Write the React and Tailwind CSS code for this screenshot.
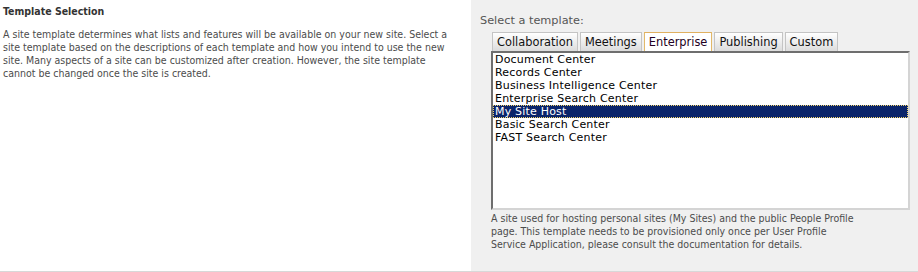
import React from "react";

const items = [
  "Document Center",
  "Records Center",
  "Business Intelligence Center",
  "Enterprise Search Center",
  "My Site Host",
  "Basic Search Center",
  "FAST Search Center",
];

const tabs = ["Collaboration", "Meetings", "Enterprise", "Publishing", "Custom"];

export default function App() {
  return (
    <div className="w-[918px] h-[272px] flex flex-col bg-white overflow-hidden">
      <div className="flex flex-1 border-b border-[#d8d8d8]">
        <div className="w-[471px] shrink-0 pl-[3px] pt-[4px] text-[#4c4c4c]">
          <div className="font-[family-name:'DejaVu_Sans_Condensed',sans-serif] text-[10.5px] font-bold leading-[14px] text-[#333]">
            Template Selection
          </div>
          <div className="mt-[10px] text-[10.5px] leading-[13px] font-[family-name:'DejaVu_Sans_Condensed',sans-serif] whitespace-nowrap">
            <div>A site template determines what lists and features will be available on your new site. Select a</div>
            <div>site template based on the descriptions of each template and how you intend to use the new</div>
            <div>site. Many aspects of a site can be customized after creation. However, the site template</div>
            <div>cannot be changed once the site is created.</div>
          </div>
        </div>
        <div className="flex-1 bg-[#f0f0f0] pt-[14px]">
          <div className="pl-[9px] text-[11.3px] leading-[13px] text-[#555] font-[family-name:'DejaVu_Sans',sans-serif]">
            Select a template:
          </div>
          <div className="pl-[20px] mt-[5px]">
            <div className="flex gap-[2px] pl-[1px] h-[19px] items-stretch">
              {tabs.map((t) =>
                t === "Enterprise" ? (
                  <div
                    key={t}
                    className="px-[4px] bg-white border border-b-0 border-[#e2b96a] border-t-[#e0b060] text-[11.4px] leading-[19px] text-[#220022] font-[family-name:'DejaVu_Sans',sans-serif]"
                  >
                    {t}
                  </div>
                ) : (
                  <div
                    key={t}
                    className="px-[4px] bg-gradient-to-b from-white to-[#dcdcdc] border border-b-0 border-[#c4c4c4] text-[11.4px] leading-[19px] text-[#111] font-[family-name:'DejaVu_Sans',sans-serif]"
                  >
                    {t}
                  </div>
                )
              )}
            </div>
            <div className="w-[419px] h-[159px] bg-white border-2 border-t-[#6e6e6e] border-l-[#6e6e6e] border-r-[#d4d4d4] border-b-[#d4d4d4] overflow-hidden">
              {items.map((it) =>
                it === "My Site Host" ? (
                  <div
                    key={it}
                    className="h-[13px] bg-[#0a246a] text-white pl-[2px] pt-[1px] text-[11px] tracking-[0.2px] leading-[12px] font-[family-name:'DejaVu_Sans',sans-serif] outline-1 outline-dotted outline-[#f5d66a] -outline-offset-1"
                  >
                    {it}
                  </div>
                ) : (
                  <div
                    key={it}
                    className="h-[13px] pl-[2px] pt-[1px] text-[11px] tracking-[0.2px] leading-[12px] text-black font-[family-name:'DejaVu_Sans',sans-serif]"
                  >
                    {it}
                  </div>
                )
              )}
            </div>
            <div className="mt-[2px] text-[10.5px] leading-[13px] text-[#4c4c4c] font-[family-name:'DejaVu_Sans_Condensed',sans-serif] whitespace-nowrap">
              <div>A site used for hosting personal sites (My Sites) and the public People Profile</div>
              <div>page. This template needs to be provisioned only once per User Profile</div>
              <div>Service Application, please consult the documentation for details.</div>
            </div>
          </div>
        </div>
      </div>
    </div>
  );
}
